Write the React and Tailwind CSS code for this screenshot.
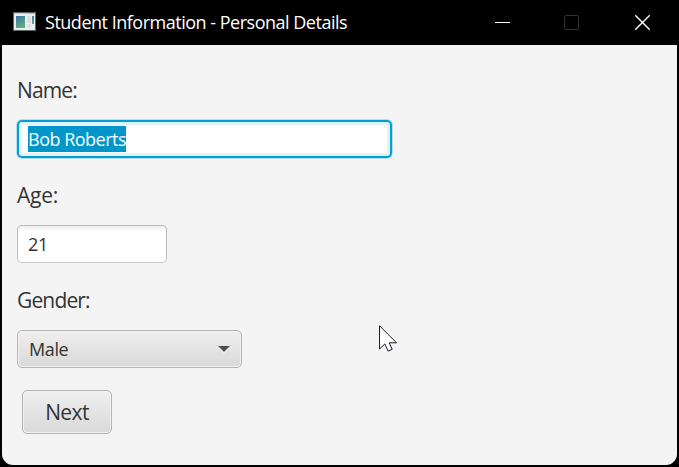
function WindowIcon() {
  return (
    <svg width="23" height="19" viewBox="0 0 23 19" shapeRendering="crispEdges">
      <defs>
        <linearGradient id="pane" x1="0" y1="0" x2="0.4" y2="1">
          <stop offset="0" stopColor="#3a72a8" />
          <stop offset="1" stopColor="#5fae82" />
        </linearGradient>
      </defs>
      <rect width="23" height="19" fill="#5c6468" />
      <rect x="1" y="1" width="21" height="17" fill="#eceeef" />
      <rect x="1" y="1" width="21" height="1" fill="#c3cbd0" />
      <rect x="16" y="1" width="5" height="1" fill="#a9b3ba" />
      <rect x="3" y="4" width="9" height="12" fill="url(#pane)" />
      <rect x="14" y="4" width="4" height="7" fill="#dcdfe0" />
      <rect x="14" y="12" width="4" height="4" fill="#dfe2e3" />
      <rect x="19" y="4" width="2" height="8" fill="url(#pane)" />
    </svg>
  );
}

function TitleBar() {
  return (
    <header className="flex h-[45px] items-center bg-black pl-[13px]">
      <div className="-mt-0.5 flex">
        <WindowIcon />
      </div>
      <h1 className="-mt-0.5 ml-[9px] flex-1 whitespace-nowrap text-[18px] leading-6 tracking-[-0.49px] text-white">
        Student Information - Personal Details
      </h1>
      <div className="mr-[29px] flex w-[155px] items-center justify-between">
        <svg width="15" height="15" viewBox="0 0 15 15">
          <path d="M0 7.5h15" stroke="#fff" />
        </svg>
        <svg width="15" height="15" viewBox="0 0 15 15" className="mr-0.5">
          <rect x="0.5" y="0.5" width="14" height="14" rx="1.5" fill="none" stroke="#333" />
        </svg>
        <svg width="15" height="15" viewBox="0 0 15 15">
          <path d="M.3 .3l14.4 14.4M14.7 .3L.3 14.7" stroke="#fff" strokeWidth="1.4" />
        </svg>
      </div>
    </header>
  );
}

export default function App() {
  return (
    <div className="relative flex h-[467px] w-[679px] flex-col overflow-hidden bg-black font-['Open_Sans','Noto_Sans',sans-serif]">
      <TitleBar />
      <main className="mx-0.5 flex h-[420px] flex-col items-start rounded-b-[11px] bg-[#f4f4f4] pl-[15px] pt-[30px] text-[#333]">
        <label className="h-[30px] text-[21px] leading-[30px] tracking-[-0.85px]">Name:</label>
        <div className="mt-[15px] flex h-[38px] w-[375px] items-center rounded-[5px] border-2 border-[#039ed3] bg-white pl-[9px] shadow-[0_0_0_1px_#b5dfee,inset_0_0_0_3px_#def3fa]">
          <span className="flex h-[26px] w-[98px] items-center whitespace-nowrap bg-[#0096c9] text-[18px] leading-[26px] tracking-[-0.5px] text-white">
            Bob Roberts
          </span>
        </div>

        <label className="mt-[22px] h-[30px] text-[21px] leading-[30px] tracking-[-0.2px]">Age:</label>
        <div className="mt-[15px] flex h-[38px] w-[150px] items-center rounded-[5px] border border-[#bababa] border-b-[#c8c8c8] bg-white bg-linear-to-b from-[#eeeeee] to-white to-15% pl-[10px] text-[18px] tracking-[-0.4px]">
          21
        </div>

        <label className="mt-[22px] h-[30px] text-[21px] leading-[30px] tracking-[-0.85px]">Gender:</label>
        <div className="mt-[15px] flex h-[38px] w-[225px] items-center justify-between rounded-[5px] border border-[#b5b5b5] bg-linear-to-b from-[#efefef] to-[#d9d9d9] pl-[11px] pr-[11px] text-[18px] tracking-[-0.4px] shadow-[inset_0_0_0_1px_#f1f1f1]">
          <span>Male</span>
          <svg width="12" height="8" viewBox="0 0 12 8">
            <path d="M0 2h12L6 8z" fill="#fff" />
            <path d="M0 1h12L6 7z" fill="#4d4d4d" />
          </svg>
        </div>

        <button className="ml-[5px] mt-[22px] flex h-[44px] w-[90px] items-center justify-center rounded-[5px] border border-[#b5b5b5] bg-linear-to-b from-[#efefef] to-[#d9d9d9] pt-0.5 text-[21px] tracking-[-0.6px] shadow-[inset_0_0_0_1px_#f1f1f1]">
          Next
        </button>
      </main>
      <svg className="absolute left-[379px] top-[325px]" width="19" height="29" viewBox="0 0 19 29">
        <path
          d="M.5 .7v23.3l5.4-5.1 3.1 7.2 4.2-1.8-3-6.5h7.3z"
          fill="#fff"
          stroke="#1c1c28"
        />
      </svg>
    </div>
  );
}
